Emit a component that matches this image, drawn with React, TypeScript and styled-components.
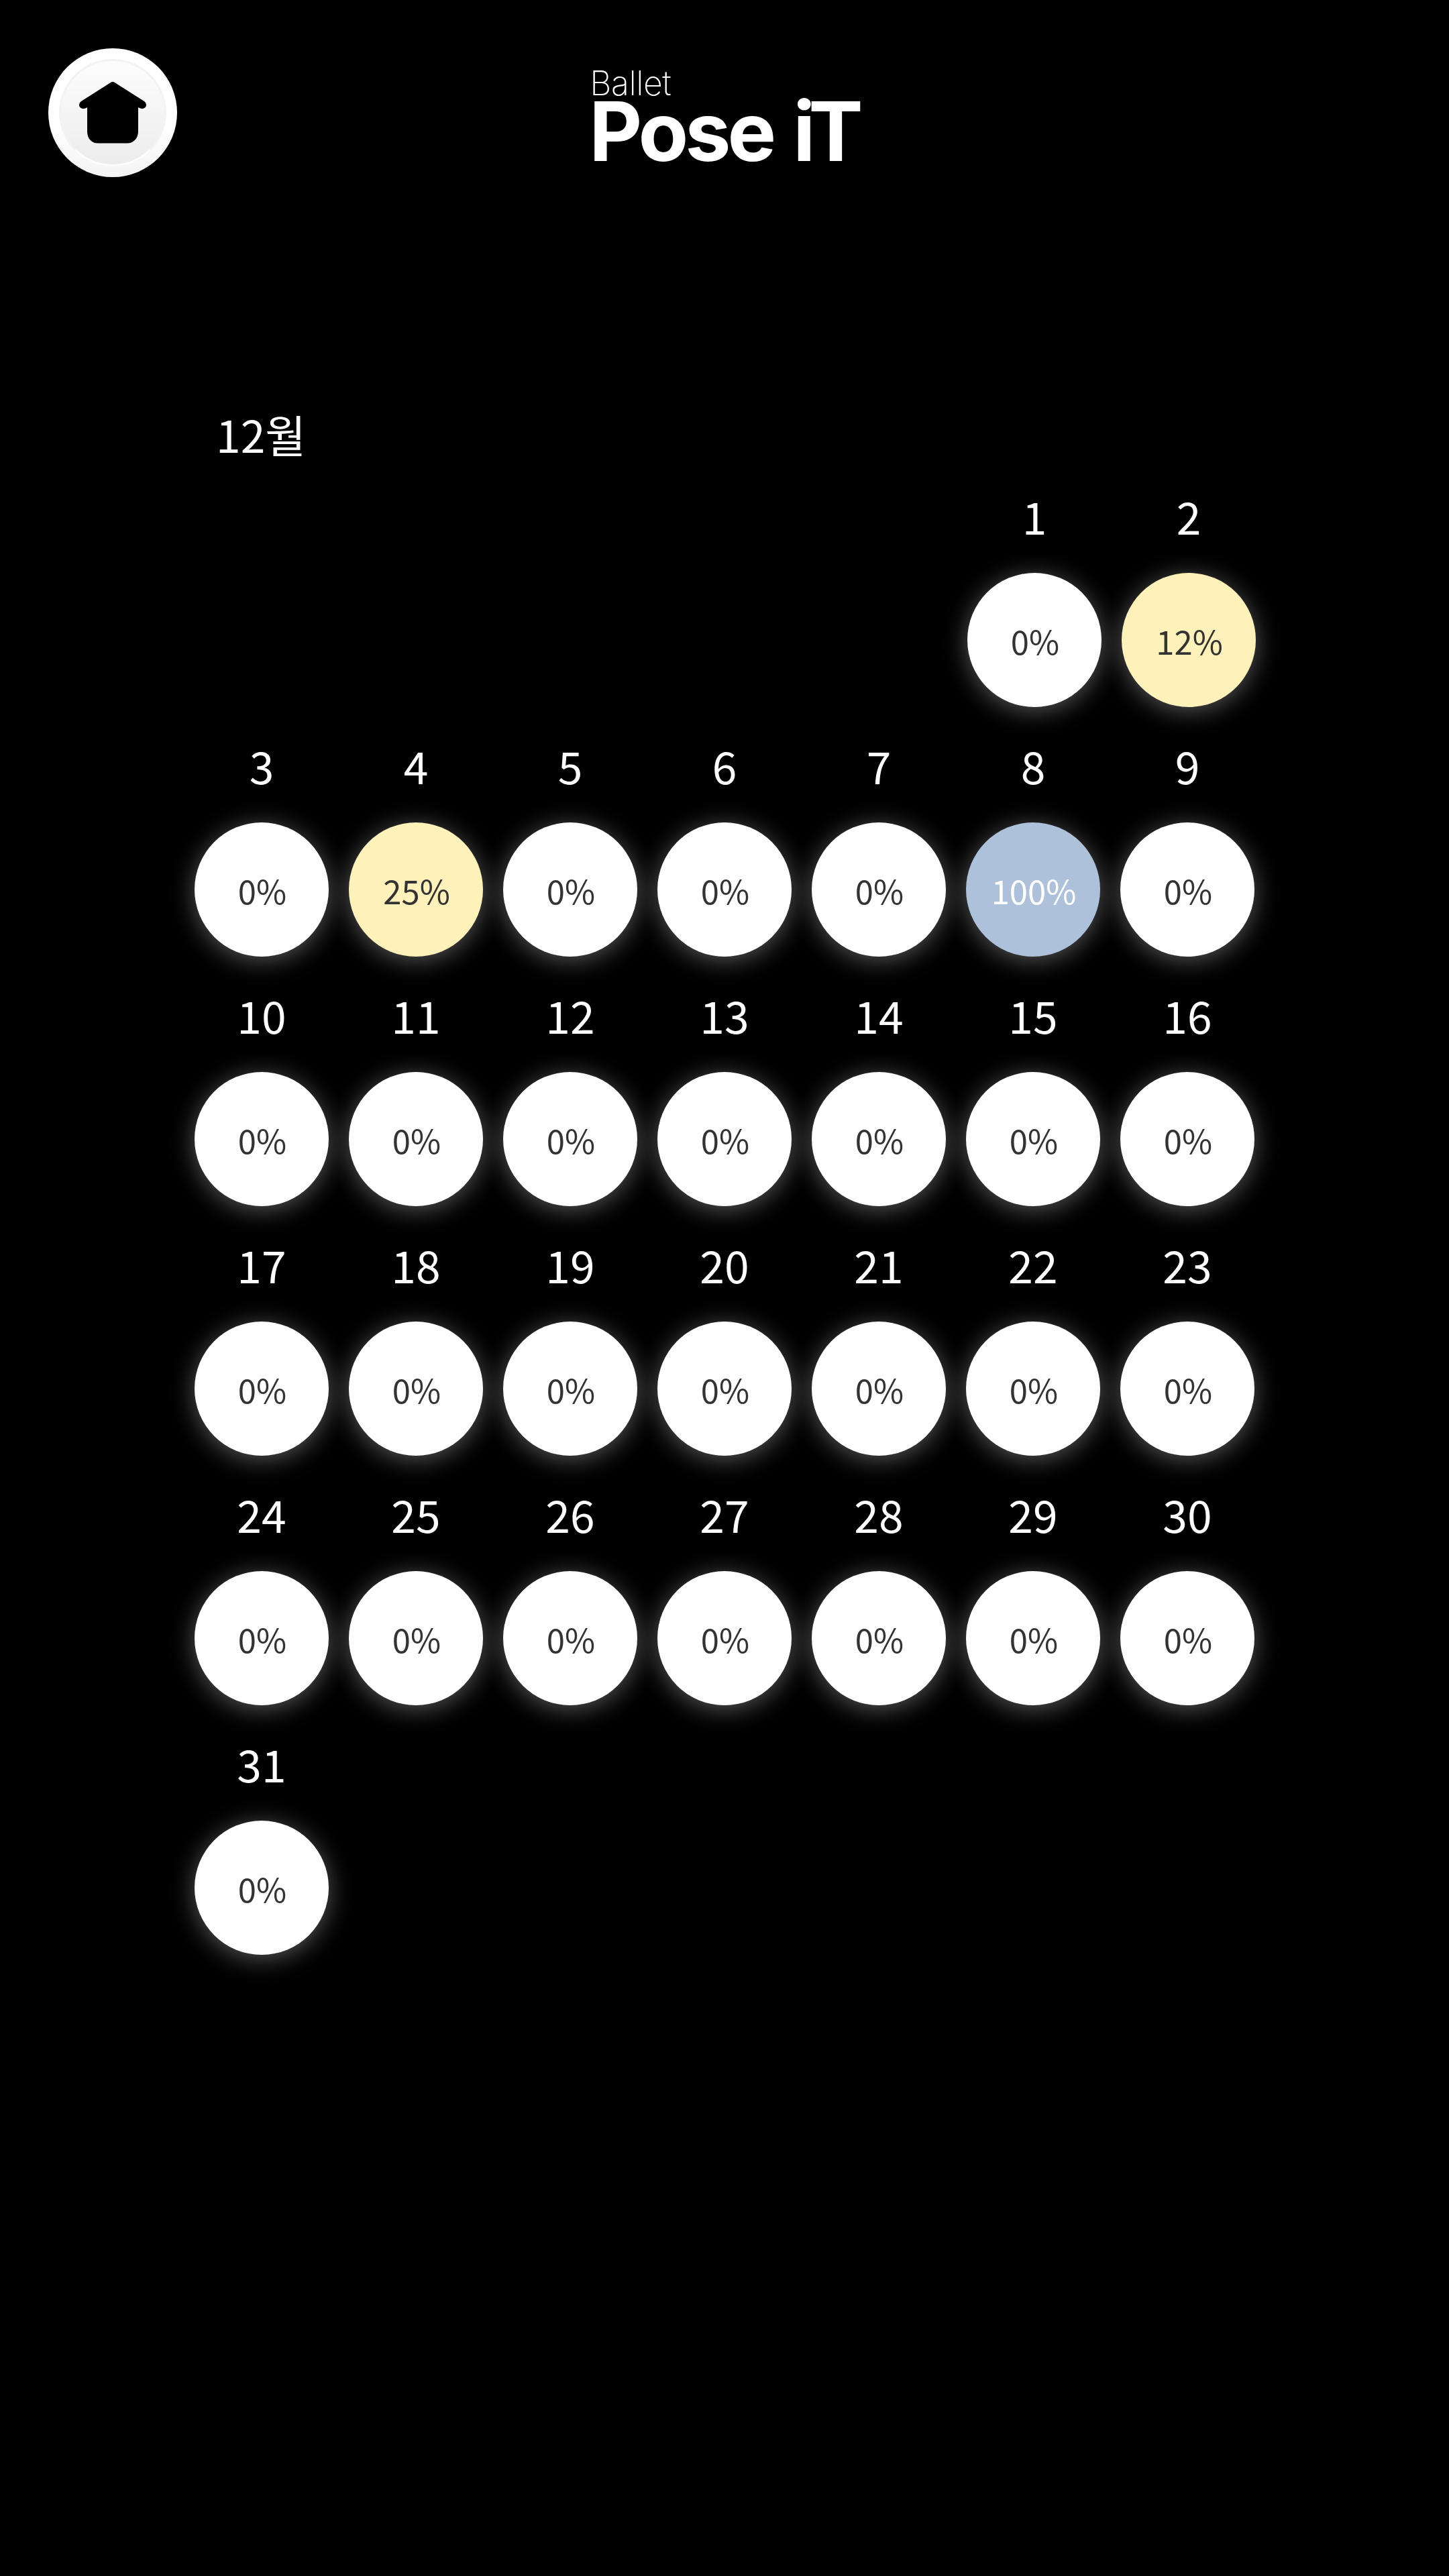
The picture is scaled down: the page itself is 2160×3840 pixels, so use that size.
import React from 'react';
import styled, { createGlobalStyle } from 'styled-components';

const GlobalStyle = createGlobalStyle`
  html, body {
    margin: 0;
    padding: 0;
    background: #000;
  }
`;

const Page = styled.div`
  width: 2160px;
  min-height: 3840px;
  background: #000;
  font-family: 'Noto Sans CJK KR', 'Noto Sans', sans-serif;
  color: #fff;
`;

const Header = styled.header`
  display: grid;
  grid-template-columns: 1fr auto 1fr;
  padding: 72px 72px 0;
  height: 192px;
`;

const HomeButton = styled.button`
  width: 192px;
  height: 192px;
  padding: 0;
  border: none;
  border-radius: 50%;
  background: linear-gradient(180deg, #ffffff 0%, #ffffff 60%, #f3f3f3 100%);
  display: flex;
  align-items: center;
  justify-content: center;
  cursor: pointer;
`;

const HomeInner = styled.span`
  width: 160px;
  height: 160px;
  box-sizing: border-box;
  border-radius: 50%;
  border: 3px solid #f3f3f3;
  border-bottom-color: #fcfcfc;
  background: linear-gradient(180deg, #fdfdfd 0%, #ececec 100%);
  display: flex;
  align-items: center;
  justify-content: center;
`;

const Logo = styled.div`
  display: flex;
  flex-direction: column;
  font-family: Inter, 'Liberation Sans', sans-serif;
  padding-top: 26px;
`;

const LogoSmall = styled.span`
  font-size: 50px;
  font-weight: 200;
  line-height: 52px;
  letter-spacing: -0.5px;
  padding-left: 1px;
`;

const LogoBig = styled.span`
  font-size: 122px;
  font-weight: 700;
  line-height: 92px;
  letter-spacing: -5px;
  word-spacing: 6px;
  white-space: nowrap;
`;

const LogoTight = styled.span`
  letter-spacing: -10px;
`;

const Calendar = styled.main`
  width: 1580px;
  margin: 0 auto;
  padding-top: 340px;
`;

const Month = styled.h2`
  margin: 0;
  width: 198px;
  height: 84px;
  font-size: 66px;
  font-weight: 400;
  line-height: 84px;
  text-align: center;
`;

const Days = styled.div`
  display: grid;
  grid-template-columns: repeat(7, 200px);
  column-gap: 30px;
  row-gap: 30px;
  margin-top: 24px;
`;

const Cell = styled.div<{ $start?: number; $shifted?: boolean }>`
  display: flex;
  flex-direction: column;
  align-items: center;
  grid-column-start: ${p => p.$start ?? 'auto'};
  margin-left: ${p => (p.$shifted ? '2px' : '0')};
  margin-right: ${p => (p.$shifted ? '-2px' : '0')};
`;

const DayNumber = styled.span`
  height: 142px;
  font-size: 66px;
  font-weight: 400;
  line-height: 112px;
`;

const tones = {
  none: { bg: '#fff', fg: '#333' },
  some: { bg: '#fff1ba', fg: '#333' },
  done: { bg: '#aec1da', fg: '#fff' },
};

const Progress = styled.div<{ $tone: keyof typeof tones }>`
  width: 200px;
  height: 200px;
  border-radius: 50%;
  background: ${p => tones[p.$tone].bg};
  color: ${p => tones[p.$tone].fg};
  box-shadow: 0 5px 36px rgba(255, 255, 255, 0.35);
  display: flex;
  align-items: center;
  justify-content: center;
  font-size: 49px;
  font-weight: 400;
  line-height: 1;
  padding: 0 0 0 2px;
  box-sizing: border-box;
`;

const values: Record<number, number> = { 2: 12, 4: 25, 8: 100 };

const toneOf = (value: number): keyof typeof tones => {
  if (value === 100) return 'done';
  return value > 0 ? 'some' : 'none';
};

const days = Array.from({ length: 31 }, (_, i) => i + 1);

const App = () => {
  return (
    <Page>
      <GlobalStyle />
      <Header>
        <div>
          <HomeButton aria-label="home">
            <HomeInner>
              <svg width="100" height="92" viewBox="0 0 100 92">
                <path
                  d="M50 0c1 0 2 .4 3 1l44 28c2 1.500 3 3.500 3 5.500 0 3-3 5.500-6 5.500-1.500 0-3-.5-6-2v36c0 10-7 17.500-16 17.500H28c-10 0-16-7.500-16-17.500V38c-2 1.500-4 2-6 2-3 0-6-2.500-6-5.500 0-2 1-4 3-5.500L47 1c1-.6 2-1 3-1z"
                  fill="#000"
                />
              </svg>
            </HomeInner>
          </HomeButton>
        </div>
        <Logo>
          <LogoSmall>Ballet</LogoSmall>
          <LogoBig>Pose <LogoTight>i</LogoTight>T</LogoBig>
        </Logo>
        <div />
      </Header>
      <Calendar>
        <Month>12월</Month>
        <Days>
          {days.map(day => {
            const value = values[day] ?? 0;
            return (
              <Cell key={day} $start={day === 1 ? 6 : undefined} $shifted={day <= 2}>
                <DayNumber>{day}</DayNumber>
                <Progress $tone={toneOf(value)}>{value}%</Progress>
              </Cell>
            );
          })}
        </Days>
      </Calendar>
    </Page>
  );
};

export default App;
